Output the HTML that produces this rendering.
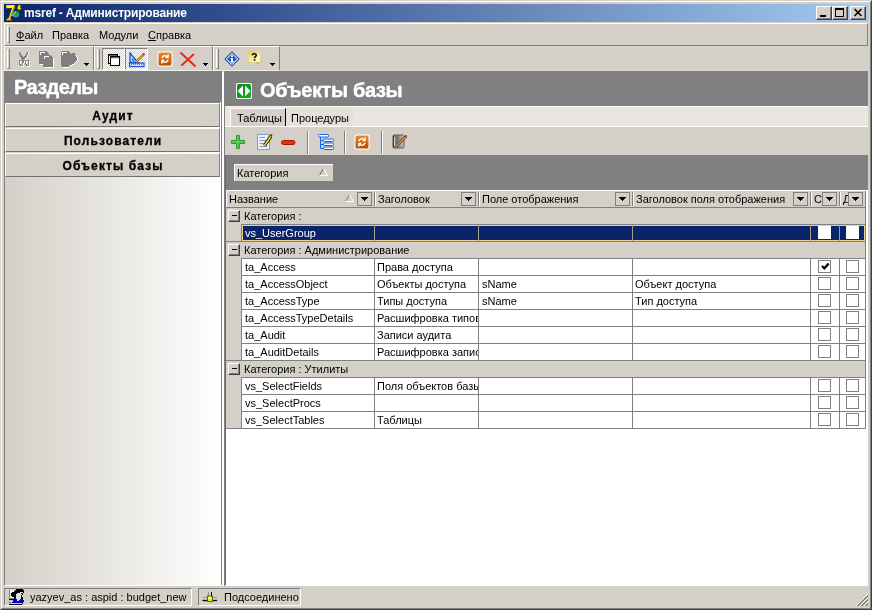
<!DOCTYPE html>
<html><head><meta charset="utf-8">
<style>
*{margin:0;padding:0;box-sizing:border-box}
html,body{width:872px;height:610px;overflow:hidden;background:#D4D0C8;font-family:"Liberation Sans",sans-serif;font-size:11px;color:#000}
.a{position:absolute}
.t{position:absolute;white-space:nowrap;line-height:13px;will-change:transform}
.raised{border-top:1px solid #fff;border-left:1px solid #fff;border-right:1px solid #808080;border-bottom:1px solid #808080}
.sunk{border-top:1px solid #808080;border-left:1px solid #808080;border-right:1px solid #fff;border-bottom:1px solid #fff}
.tri{position:absolute;left:4px;top:4px;width:0;height:0;border-left:3.5px solid transparent;border-right:3.5px solid transparent;border-top:4px solid #000}
.minus{width:12px;height:12px;background:#D4D0C8;border-top:1px solid #fff;border-left:1px solid #fff;border-right:1px solid #404040;border-bottom:1px solid #404040;box-shadow:inset -1px -1px 0 #808080}
.minus:after{content:"";position:absolute;left:3px;top:4px;width:5px;height:1px;background:#000}
.chk{border-top:1px solid #808080;border-left:1px solid #808080;border-right:1px solid #fff;border-bottom:1px solid #fff;background-color:#fff;background-image:conic-gradient(#fff 25%,#D4D0C8 0 50%,#fff 0 75%,#D4D0C8 0);background-size:2px 2px}
</style></head><body>
<!-- window frame -->
<div class="a" style="left:0;top:0;width:872px;height:610px;border-top:1px solid #D4D0C8;border-left:1px solid #D4D0C8;border-right:1px solid #404040;border-bottom:1px solid #404040"></div>
<div class="a" style="left:1px;top:1px;width:870px;height:608px;border-top:1px solid #fff;border-left:1px solid #fff;border-right:1px solid #808080;border-bottom:1px solid #808080"></div>

<!-- title bar -->
<div class="a" style="left:4px;top:4px;width:864px;height:18px;background:linear-gradient(to right,#0A246A,#A6CAF0)"></div>
<div class="t" style="left:24px;top:6px;color:#fff;font-weight:bold;font-size:12px;line-height:14px;letter-spacing:-0.2px">msref - Администрирование</div>

<!-- title buttons -->
<div class="a" style="left:816px;top:6px;width:16px;height:14px;background:#D4D0C8;border-top:1px solid #fff;border-left:1px solid #fff;border-right:1px solid #404040;border-bottom:1px solid #404040;box-shadow:inset -1px -1px 0 #808080"></div>
<div class="a" style="left:832px;top:6px;width:16px;height:14px;background:#D4D0C8;border-top:1px solid #fff;border-left:1px solid #fff;border-right:1px solid #404040;border-bottom:1px solid #404040;box-shadow:inset -1px -1px 0 #808080"></div>
<div class="a" style="left:850px;top:6px;width:16px;height:14px;background:#D4D0C8;border-top:1px solid #fff;border-left:1px solid #fff;border-right:1px solid #404040;border-bottom:1px solid #404040;box-shadow:inset -1px -1px 0 #808080"></div>

<!-- menubar -->
<div class="a" style="left:4px;top:23px;width:864px;height:23px;border-top:1px solid #fff;border-left:1px solid #fff;border-bottom:1px solid #808080;border-right:1px solid #808080"></div>
<div class="a" style="left:7px;top:26px;width:3px;height:17px;border-top:1px solid #fff;border-left:1px solid #fff;border-right:1px solid #808080;border-bottom:1px solid #808080"></div>
<div class="t" style="left:16px;top:29px"><u>Ф</u>айл</div>
<div class="t" style="left:52px;top:29px">Правка</div>
<div class="t" style="left:99px;top:29px">Модули</div>
<div class="t" style="left:148px;top:29px"><u>С</u>правка</div>

<!-- toolbar bands -->
<div class="a" style="left:4px;top:46px;width:90px;height:25px;border-top:1px solid #fff;border-left:1px solid #fff;border-bottom:1px solid #F0EFEA;border-right:1px solid #808080"></div>
<div class="a" style="left:7px;top:49px;width:3px;height:20px;border-left:1px solid #fff;border-right:1px solid #808080;border-bottom:1px solid #808080"></div>
<div class="a" style="left:94px;top:46px;width:119px;height:25px;border-top:1px solid #fff;border-left:1px solid #fff;border-bottom:1px solid #F0EFEA;border-right:1px solid #808080"></div>
<div class="a" style="left:97px;top:49px;width:3px;height:20px;border-left:1px solid #fff;border-right:1px solid #808080;border-bottom:1px solid #808080"></div>
<div class="a" style="left:213px;top:46px;width:67px;height:25px;border-top:1px solid #fff;border-left:1px solid #fff;border-bottom:1px solid #F0EFEA;border-right:1px solid #808080"></div>
<div class="a" style="left:216px;top:49px;width:3px;height:20px;border-left:1px solid #fff;border-right:1px solid #808080;border-bottom:1px solid #808080"></div>

<!-- main -->
<div class="a" style="left:4px;top:71px;width:218px;height:515px;background:linear-gradient(to right,#D4D0C8,#fff);border-left:1px solid #808080;border-top:1px solid #808080;border-bottom:1px solid #fff"></div>
<div class="a" style="left:5px;top:72px;width:216px;height:31px;background:#808080"></div>
<div class="t" style="left:14px;top:76px;color:#fff;font-weight:bold;font-size:20px;line-height:22px;letter-spacing:-0.6px;-webkit-text-stroke:0.4px #fff">Разделы</div>
<div class="a raised" style="left:5px;top:103px;width:215px;height:24px;background:#D4D0C8;border-bottom-color:#707070"></div>
<div class="a raised" style="left:5px;top:128px;width:215px;height:24px;background:#D4D0C8;border-bottom-color:#707070"></div>
<div class="a raised" style="left:5px;top:153px;width:215px;height:24px;background:#D4D0C8;border-bottom-color:#707070"></div>
<div class="t" style="left:5px;top:110px;width:215px;text-align:center;font-weight:bold;font-size:12px;letter-spacing:1.1px;text-indent:1.1px;-webkit-text-stroke:0.3px #000">Аудит</div>
<div class="t" style="left:5px;top:135px;width:215px;text-align:center;font-weight:bold;font-size:12px;letter-spacing:1.1px;text-indent:1.1px;-webkit-text-stroke:0.3px #000">Пользователи</div>
<div class="t" style="left:5px;top:160px;width:215px;text-align:center;font-weight:bold;font-size:12px;letter-spacing:1.1px;text-indent:1.1px;-webkit-text-stroke:0.3px #000">Объекты базы</div>
<div class="a" style="left:222px;top:72px;width:2px;height:514px;background:#fff"></div>
<div class="a" style="left:221px;top:71px;width:1px;height:514px;background:#808080"></div>
<div class="a" style="left:220px;top:102px;width:1px;height:483px;background:#fff"></div>

<!-- right panel -->
<div class="a" style="left:224px;top:71px;width:644px;height:515px;background:#fff;border-left:1px solid #808080;border-top:1px solid #808080"></div>
<div class="a" style="left:225px;top:72px;width:643px;height:34px;background:#808080"></div>
<div class="t" style="left:260px;top:79px;color:#fff;font-weight:bold;font-size:20px;line-height:22px;letter-spacing:-0.35px;-webkit-text-stroke:0.4px #fff">Объекты базы</div>
<!-- tab strip -->
<div class="a" style="left:225px;top:106px;width:643px;height:21px;background:#E9E6E0;border-top:1px solid #F8F8F4;border-bottom:1px solid #fff"></div>
<div class="a" style="left:230px;top:108px;width:56px;height:18px;background:#D4D0C8;border-top:1px solid #fff;border-left:1px solid #fff;border-right:1px solid #000"></div>
<div class="t" style="left:237px;top:112px">Таблицы</div>
<div class="a" style="left:286px;top:108px;width:67px;height:18px;background:#E4E1D8"></div>
<div class="t" style="left:291px;top:112px">Процедуры</div>
<!-- panel toolbar -->
<div class="a" style="left:225px;top:127px;width:643px;height:28px;background:#D4D0C8"></div>
<div class="a" style="left:307px;top:131px;width:2px;height:23px;border-left:1px solid #808080;border-right:1px solid #fff"></div>
<div class="a" style="left:344px;top:131px;width:2px;height:23px;border-left:1px solid #808080;border-right:1px solid #fff"></div>
<div class="a" style="left:381px;top:131px;width:2px;height:23px;border-left:1px solid #808080;border-right:1px solid #fff"></div>
<!-- group panel -->
<div class="a" style="left:225px;top:155px;width:643px;height:35px;background:#808080"></div>
<div class="a" style="left:234px;top:164px;width:99px;height:17px;background:#D4D0C8;border-top:1px solid #fff;border-left:1px solid #fff"></div>
<div class="t" style="left:237px;top:167px">Категория</div>
<svg class="a" style="left:319px;top:168px" width="9" height="8"><path d="M4.5 0.5 L0.5 7.5" stroke="#606060" fill="none"/><path d="M4.5 0.5 L8.5 7.5 L0.5 7.5" stroke="#fff" fill="none"/></svg>

<!-- grid -->
<div class="a" style="left:225px;top:155px;width:1px;height:430px;background:#6C6C6C"></div>
<div class="a" style="left:226px;top:190px;width:639px;height:18px;background:#D4D0C8;border-top:1px solid #fff;border-left:1px solid #fff;border-bottom:1px solid #808080"></div>
<div class="t" style="left:229px;top:193px">Название</div>
<div class="a" style="left:374px;top:192px;width:2px;height:14px;border-left:1px solid #808080;border-right:1px solid #fff"></div>
<div class="a" style="left:357px;top:192px;width:15px;height:14px;background:#D4D0C8;border:1px solid #808080"><svg class="a" style="left:3px;top:4px" width="7" height="4"><path d="M0 0H7V1H6V2H5V3H4V4H3V3H2V2H1V1H0Z" fill="#000"/></svg></div>
<div class="t" style="left:378px;top:193px">Заголовок</div>
<div class="a" style="left:478px;top:192px;width:2px;height:14px;border-left:1px solid #808080;border-right:1px solid #fff"></div>
<div class="a" style="left:461px;top:192px;width:15px;height:14px;background:#D4D0C8;border:1px solid #808080"><svg class="a" style="left:3px;top:4px" width="7" height="4"><path d="M0 0H7V1H6V2H5V3H4V4H3V3H2V2H1V1H0Z" fill="#000"/></svg></div>
<div class="t" style="left:482px;top:193px">Поле отображения</div>
<div class="a" style="left:632px;top:192px;width:2px;height:14px;border-left:1px solid #808080;border-right:1px solid #fff"></div>
<div class="a" style="left:615px;top:192px;width:15px;height:14px;background:#D4D0C8;border:1px solid #808080"><svg class="a" style="left:3px;top:4px" width="7" height="4"><path d="M0 0H7V1H6V2H5V3H4V4H3V3H2V2H1V1H0Z" fill="#000"/></svg></div>
<div class="t" style="left:636px;top:193px">Заголовок поля отображения</div>
<div class="a" style="left:810px;top:192px;width:2px;height:14px;border-left:1px solid #808080;border-right:1px solid #fff"></div>
<div class="a" style="left:793px;top:192px;width:15px;height:14px;background:#D4D0C8;border:1px solid #808080"><svg class="a" style="left:3px;top:4px" width="7" height="4"><path d="M0 0H7V1H6V2H5V3H4V4H3V3H2V2H1V1H0Z" fill="#000"/></svg></div>
<div class="t" style="left:814px;top:193px">С</div>
<div class="a" style="left:839px;top:192px;width:2px;height:14px;border-left:1px solid #808080;border-right:1px solid #fff"></div>
<div class="a" style="left:822px;top:192px;width:15px;height:14px;background:#D4D0C8;border:1px solid #808080"><svg class="a" style="left:3px;top:4px" width="7" height="4"><path d="M0 0H7V1H6V2H5V3H4V4H3V3H2V2H1V1H0Z" fill="#000"/></svg></div>
<div class="t" style="left:843px;top:193px">Д</div>
<div class="a" style="left:848px;top:192px;width:15px;height:14px;background:#D4D0C8;border:1px solid #808080"><svg class="a" style="left:3px;top:4px" width="7" height="4"><path d="M0 0H7V1H6V2H5V3H4V4H3V3H2V2H1V1H0Z" fill="#000"/></svg></div>
<svg class="a" style="left:345px;top:194px" width="9" height="8"><path d="M4.5 0.5 L0.5 7.5" stroke="#808080" fill="none"/><path d="M4.5 0.5 L8.5 7.5 L0.5 7.5" stroke="#fff" fill="none"/></svg>
<div class="a" style="left:226px;top:208px;width:15px;height:220px;background:#D4D0C8"></div>
<div class="a" style="left:226px;top:207px;width:639px;height:17px;background:#D4D0C8;border-top:1px solid #808080"></div>
<div class="a minus" style="left:228px;top:210px"></div>
<div class="t" style="left:244px;top:210px">Категория :</div>
<div class="a" style="left:241px;top:224px;width:624px;height:17px;background:#fff;border-top:1px solid #808080;border-left:1px solid #808080"></div>
<div class="a" style="left:242px;top:225px;width:623px;height:16px;background:#0A246A;border:1px solid #ECD088"></div>
<div class="a" style="left:374px;top:225px;width:1px;height:16px;background:#A8A080"></div>
<div class="a" style="left:478px;top:225px;width:1px;height:16px;background:#A8A080"></div>
<div class="a" style="left:632px;top:225px;width:1px;height:16px;background:#A8A080"></div>
<div class="a" style="left:810px;top:225px;width:1px;height:16px;background:#A8A080"></div>
<div class="a" style="left:839px;top:225px;width:1px;height:16px;background:#A8A080"></div>
<div class="a" style="left:818px;top:226px;width:13px;height:13px;background:#fff"></div>
<div class="a" style="left:846px;top:226px;width:13px;height:13px;background:#fff"></div>
<div class="t" style="left:245px;top:227px;width:129px;overflow:hidden;color:#fff">vs_UserGroup</div>
<div class="a" style="left:226px;top:241px;width:639px;height:17px;background:#D4D0C8;border-top:1px solid #808080"></div>
<div class="a minus" style="left:228px;top:244px"></div>
<div class="t" style="left:244px;top:244px">Категория : Администрирование</div>
<div class="a" style="left:241px;top:258px;width:624px;height:17px;background:#fff;border-top:1px solid #808080;border-left:1px solid #808080"></div>
<div class="a" style="left:374px;top:258px;width:1px;height:17px;background:#808080"></div>
<div class="a" style="left:478px;top:258px;width:1px;height:17px;background:#808080"></div>
<div class="a" style="left:632px;top:258px;width:1px;height:17px;background:#808080"></div>
<div class="a" style="left:810px;top:258px;width:1px;height:17px;background:#808080"></div>
<div class="a" style="left:839px;top:258px;width:1px;height:17px;background:#808080"></div>
<div class="a" style="left:818px;top:260px;width:13px;height:13px;border:1px solid #808080;background:#fff"><svg class="a" style="left:2px;top:1px" width="9" height="9"><path d="M1 4 L3.3 6.3 L7.7 1.5" stroke="#000" stroke-width="2.2" fill="none"/></svg></div>
<div class="a" style="left:846px;top:260px;width:13px;height:13px;border:1px solid #808080;background:#fff"></div>
<div class="t" style="left:245px;top:261px;width:129px;overflow:hidden;color:#000">ta_Access</div>
<div class="t" style="left:377px;top:261px;width:101px;overflow:hidden;color:#000">Права доступа</div>
<div class="a" style="left:241px;top:275px;width:624px;height:17px;background:#fff;border-top:1px solid #808080;border-left:1px solid #808080"></div>
<div class="a" style="left:374px;top:275px;width:1px;height:17px;background:#808080"></div>
<div class="a" style="left:478px;top:275px;width:1px;height:17px;background:#808080"></div>
<div class="a" style="left:632px;top:275px;width:1px;height:17px;background:#808080"></div>
<div class="a" style="left:810px;top:275px;width:1px;height:17px;background:#808080"></div>
<div class="a" style="left:839px;top:275px;width:1px;height:17px;background:#808080"></div>
<div class="a" style="left:818px;top:277px;width:13px;height:13px;border:1px solid #808080;background:#fff"></div>
<div class="a" style="left:846px;top:277px;width:13px;height:13px;border:1px solid #808080;background:#fff"></div>
<div class="t" style="left:245px;top:278px;width:129px;overflow:hidden;color:#000">ta_AccessObject</div>
<div class="t" style="left:377px;top:278px;width:101px;overflow:hidden;color:#000">Объекты доступа</div>
<div class="t" style="left:482px;top:278px;width:150px;overflow:hidden;color:#000">sName</div>
<div class="t" style="left:635px;top:278px;width:175px;overflow:hidden;color:#000">Объект доступа</div>
<div class="a" style="left:241px;top:292px;width:624px;height:17px;background:#fff;border-top:1px solid #808080;border-left:1px solid #808080"></div>
<div class="a" style="left:374px;top:292px;width:1px;height:17px;background:#808080"></div>
<div class="a" style="left:478px;top:292px;width:1px;height:17px;background:#808080"></div>
<div class="a" style="left:632px;top:292px;width:1px;height:17px;background:#808080"></div>
<div class="a" style="left:810px;top:292px;width:1px;height:17px;background:#808080"></div>
<div class="a" style="left:839px;top:292px;width:1px;height:17px;background:#808080"></div>
<div class="a" style="left:818px;top:294px;width:13px;height:13px;border:1px solid #808080;background:#fff"></div>
<div class="a" style="left:846px;top:294px;width:13px;height:13px;border:1px solid #808080;background:#fff"></div>
<div class="t" style="left:245px;top:295px;width:129px;overflow:hidden;color:#000">ta_AccessType</div>
<div class="t" style="left:377px;top:295px;width:101px;overflow:hidden;color:#000">Типы доступа</div>
<div class="t" style="left:482px;top:295px;width:150px;overflow:hidden;color:#000">sName</div>
<div class="t" style="left:635px;top:295px;width:175px;overflow:hidden;color:#000">Тип доступа</div>
<div class="a" style="left:241px;top:309px;width:624px;height:17px;background:#fff;border-top:1px solid #808080;border-left:1px solid #808080"></div>
<div class="a" style="left:374px;top:309px;width:1px;height:17px;background:#808080"></div>
<div class="a" style="left:478px;top:309px;width:1px;height:17px;background:#808080"></div>
<div class="a" style="left:632px;top:309px;width:1px;height:17px;background:#808080"></div>
<div class="a" style="left:810px;top:309px;width:1px;height:17px;background:#808080"></div>
<div class="a" style="left:839px;top:309px;width:1px;height:17px;background:#808080"></div>
<div class="a" style="left:818px;top:311px;width:13px;height:13px;border:1px solid #808080;background:#fff"></div>
<div class="a" style="left:846px;top:311px;width:13px;height:13px;border:1px solid #808080;background:#fff"></div>
<div class="t" style="left:245px;top:312px;width:129px;overflow:hidden;color:#000">ta_AccessTypeDetails</div>
<div class="t" style="left:377px;top:312px;width:101px;overflow:hidden;color:#000">Расшифровка типов доступа</div>
<div class="a" style="left:241px;top:326px;width:624px;height:17px;background:#fff;border-top:1px solid #808080;border-left:1px solid #808080"></div>
<div class="a" style="left:374px;top:326px;width:1px;height:17px;background:#808080"></div>
<div class="a" style="left:478px;top:326px;width:1px;height:17px;background:#808080"></div>
<div class="a" style="left:632px;top:326px;width:1px;height:17px;background:#808080"></div>
<div class="a" style="left:810px;top:326px;width:1px;height:17px;background:#808080"></div>
<div class="a" style="left:839px;top:326px;width:1px;height:17px;background:#808080"></div>
<div class="a" style="left:818px;top:328px;width:13px;height:13px;border:1px solid #808080;background:#fff"></div>
<div class="a" style="left:846px;top:328px;width:13px;height:13px;border:1px solid #808080;background:#fff"></div>
<div class="t" style="left:245px;top:329px;width:129px;overflow:hidden;color:#000">ta_Audit</div>
<div class="t" style="left:377px;top:329px;width:101px;overflow:hidden;color:#000">Записи аудита</div>
<div class="a" style="left:241px;top:343px;width:624px;height:17px;background:#fff;border-top:1px solid #808080;border-left:1px solid #808080"></div>
<div class="a" style="left:374px;top:343px;width:1px;height:17px;background:#808080"></div>
<div class="a" style="left:478px;top:343px;width:1px;height:17px;background:#808080"></div>
<div class="a" style="left:632px;top:343px;width:1px;height:17px;background:#808080"></div>
<div class="a" style="left:810px;top:343px;width:1px;height:17px;background:#808080"></div>
<div class="a" style="left:839px;top:343px;width:1px;height:17px;background:#808080"></div>
<div class="a" style="left:818px;top:345px;width:13px;height:13px;border:1px solid #808080;background:#fff"></div>
<div class="a" style="left:846px;top:345px;width:13px;height:13px;border:1px solid #808080;background:#fff"></div>
<div class="t" style="left:245px;top:346px;width:129px;overflow:hidden;color:#000">ta_AuditDetails</div>
<div class="t" style="left:377px;top:346px;width:101px;overflow:hidden;color:#000">Расшифровка записей аудита</div>
<div class="a" style="left:226px;top:360px;width:639px;height:17px;background:#D4D0C8;border-top:1px solid #808080"></div>
<div class="a minus" style="left:228px;top:363px"></div>
<div class="t" style="left:244px;top:363px">Категория : Утилиты</div>
<div class="a" style="left:241px;top:377px;width:624px;height:17px;background:#fff;border-top:1px solid #808080;border-left:1px solid #808080"></div>
<div class="a" style="left:374px;top:377px;width:1px;height:17px;background:#808080"></div>
<div class="a" style="left:478px;top:377px;width:1px;height:17px;background:#808080"></div>
<div class="a" style="left:632px;top:377px;width:1px;height:17px;background:#808080"></div>
<div class="a" style="left:810px;top:377px;width:1px;height:17px;background:#808080"></div>
<div class="a" style="left:839px;top:377px;width:1px;height:17px;background:#808080"></div>
<div class="a" style="left:818px;top:379px;width:13px;height:13px;border:1px solid #808080;background:#fff"></div>
<div class="a" style="left:846px;top:379px;width:13px;height:13px;border:1px solid #808080;background:#fff"></div>
<div class="t" style="left:245px;top:380px;width:129px;overflow:hidden;color:#000">vs_SelectFields</div>
<div class="t" style="left:377px;top:380px;width:101px;overflow:hidden;color:#000">Поля объектов базы</div>
<div class="a" style="left:241px;top:394px;width:624px;height:17px;background:#fff;border-top:1px solid #808080;border-left:1px solid #808080"></div>
<div class="a" style="left:374px;top:394px;width:1px;height:17px;background:#808080"></div>
<div class="a" style="left:478px;top:394px;width:1px;height:17px;background:#808080"></div>
<div class="a" style="left:632px;top:394px;width:1px;height:17px;background:#808080"></div>
<div class="a" style="left:810px;top:394px;width:1px;height:17px;background:#808080"></div>
<div class="a" style="left:839px;top:394px;width:1px;height:17px;background:#808080"></div>
<div class="a" style="left:818px;top:396px;width:13px;height:13px;border:1px solid #808080;background:#fff"></div>
<div class="a" style="left:846px;top:396px;width:13px;height:13px;border:1px solid #808080;background:#fff"></div>
<div class="t" style="left:245px;top:397px;width:129px;overflow:hidden;color:#000">vs_SelectProcs</div>
<div class="a" style="left:241px;top:411px;width:624px;height:17px;background:#fff;border-top:1px solid #808080;border-left:1px solid #808080"></div>
<div class="a" style="left:374px;top:411px;width:1px;height:17px;background:#808080"></div>
<div class="a" style="left:478px;top:411px;width:1px;height:17px;background:#808080"></div>
<div class="a" style="left:632px;top:411px;width:1px;height:17px;background:#808080"></div>
<div class="a" style="left:810px;top:411px;width:1px;height:17px;background:#808080"></div>
<div class="a" style="left:839px;top:411px;width:1px;height:17px;background:#808080"></div>
<div class="a" style="left:818px;top:413px;width:13px;height:13px;border:1px solid #808080;background:#fff"></div>
<div class="a" style="left:846px;top:413px;width:13px;height:13px;border:1px solid #808080;background:#fff"></div>
<div class="t" style="left:245px;top:414px;width:129px;overflow:hidden;color:#000">vs_SelectTables</div>
<div class="t" style="left:377px;top:414px;width:101px;overflow:hidden;color:#000">Таблицы</div>
<div class="a" style="left:226px;top:428px;width:640px;height:1px;background:#808080"></div>
<div class="a" style="left:865px;top:191px;width:1px;height:238px;background:#808080"></div>


<!-- ICONS -->
<svg class="a" style="left:4px;top:4px" width="20" height="18" viewBox="0 0 20 18">
 <path d="M2 1.3 L10.5 1 L10.8 3 L6 15.5 L4 16 L8 4 L2.5 4.2 Z" fill="#FFFF00"/>
 <path d="M10.5 1 L10.8 3 L6 15.5 L5 15.5 L9.2 3.2 Z" fill="#E09000"/>
 <path d="M4 14 L6.5 14.5 L8 16.3 L2 16.5 Z" fill="#E8D000"/>
 <path d="M6.5 15 L8.5 16.5 L5.5 16.5 Z" fill="#C04000"/>
 <circle cx="11.8" cy="10.2" r="3.3" fill="#3898A0"/>
 <path d="M9.5 8.5 L12.5 7 L14.5 9 L13 11.5 L11 11 Z" fill="#10B020"/>
 <path d="M8 12 L12 8" stroke="#D8C8D8" stroke-width="1"/>
 <path d="M14.5 0.8 L17.3 1.5 L15.8 3.5 L17.8 4 L12.8 8.2 L14.8 5.3 L13 4.8 Z" fill="#FFFF00" stroke="#202000" stroke-width="0.4"/>
</svg>
<!-- title button glyphs -->
<div class="a" style="left:820px;top:15px;width:6px;height:2px;background:#000"></div>
<div class="a" style="left:835px;top:8px;width:9px;height:9px;border:1px solid #000;border-top-width:2px"></div>
<svg class="a" style="left:853px;top:8px" width="10" height="9"><path d="M1.5 1 L8.5 8 M8.5 1 L1.5 8" stroke="#000" stroke-width="1.6"/></svg>

<!-- toolbar 1 disabled icons -->
<svg class="a" style="left:18px;top:51px" width="12" height="16"><rect x="1" y="1" width="1" height="1" fill="#808080"/><rect x="9" y="1" width="1" height="1" fill="#808080"/><rect x="1" y="2" width="2" height="1" fill="#808080"/><rect x="8" y="2" width="2" height="1" fill="#808080"/><rect x="10" y="2" width="1" height="1" fill="#fff"/><rect x="1" y="3" width="2" height="1" fill="#808080"/><rect x="8" y="3" width="2" height="1" fill="#808080"/><rect x="10" y="3" width="1" height="1" fill="#fff"/><rect x="2" y="4" width="2" height="1" fill="#808080"/><rect x="7" y="4" width="2" height="1" fill="#808080"/><rect x="9" y="4" width="1" height="1" fill="#fff"/><rect x="2" y="5" width="3" height="1" fill="#808080"/><rect x="6" y="5" width="3" height="1" fill="#808080"/><rect x="9" y="5" width="1" height="1" fill="#fff"/><rect x="3" y="6" width="5" height="1" fill="#808080"/><rect x="8" y="6" width="1" height="1" fill="#fff"/><rect x="3" y="7" width="4" height="1" fill="#808080"/><rect x="7" y="7" width="1" height="1" fill="#fff"/><rect x="4" y="8" width="3" height="1" fill="#808080"/><rect x="7" y="8" width="1" height="1" fill="#fff"/><rect x="1" y="9" width="5" height="1" fill="#808080"/><rect x="7" y="9" width="4" height="1" fill="#808080"/><rect x="1" y="10" width="1" height="1" fill="#808080"/><rect x="2" y="10" width="2" height="1" fill="#fff"/><rect x="4" y="10" width="2" height="1" fill="#808080"/><rect x="6" y="10" width="1" height="1" fill="#fff"/><rect x="7" y="10" width="1" height="1" fill="#808080"/><rect x="8" y="10" width="2" height="1" fill="#fff"/><rect x="10" y="10" width="1" height="1" fill="#808080"/><rect x="11" y="10" width="1" height="1" fill="#fff"/><rect x="1" y="11" width="1" height="1" fill="#808080"/><rect x="2" y="11" width="1" height="1" fill="#fff"/><rect x="4" y="11" width="2" height="1" fill="#808080"/><rect x="6" y="11" width="1" height="1" fill="#fff"/><rect x="7" y="11" width="1" height="1" fill="#808080"/><rect x="8" y="11" width="1" height="1" fill="#fff"/><rect x="10" y="11" width="1" height="1" fill="#808080"/><rect x="11" y="11" width="1" height="1" fill="#fff"/><rect x="1" y="12" width="1" height="1" fill="#808080"/><rect x="2" y="12" width="1" height="1" fill="#fff"/><rect x="4" y="12" width="1" height="1" fill="#808080"/><rect x="5" y="12" width="1" height="1" fill="#fff"/><rect x="7" y="12" width="1" height="1" fill="#808080"/><rect x="8" y="12" width="1" height="1" fill="#fff"/><rect x="10" y="12" width="1" height="1" fill="#808080"/><rect x="11" y="12" width="1" height="1" fill="#fff"/><rect x="1" y="13" width="2" height="1" fill="#808080"/><rect x="4" y="13" width="1" height="1" fill="#808080"/><rect x="5" y="13" width="1" height="1" fill="#fff"/><rect x="7" y="13" width="2" height="1" fill="#808080"/><rect x="10" y="13" width="1" height="1" fill="#808080"/><rect x="11" y="13" width="1" height="1" fill="#fff"/><rect x="2" y="14" width="3" height="1" fill="#808080"/><rect x="5" y="14" width="1" height="1" fill="#fff"/><rect x="8" y="14" width="3" height="1" fill="#808080"/><rect x="11" y="14" width="1" height="1" fill="#fff"/><rect x="3" y="15" width="3" height="1" fill="#fff"/><rect x="9" y="15" width="3" height="1" fill="#fff"/></svg>
<svg class="a" style="left:39px;top:51px" width="16" height="17"><rect x="0" y="0" width="8" height="1" fill="#808080"/><rect x="0" y="1" width="1" height="1" fill="#808080"/><rect x="1" y="1" width="5" height="1" fill="#fff"/><rect x="6" y="1" width="3" height="1" fill="#808080"/><rect x="0" y="2" width="1" height="1" fill="#808080"/><rect x="1" y="2" width="1" height="1" fill="#fff"/><rect x="2" y="2" width="8" height="1" fill="#808080"/><rect x="0" y="3" width="1" height="1" fill="#808080"/><rect x="1" y="3" width="1" height="1" fill="#fff"/><rect x="2" y="3" width="8" height="1" fill="#808080"/><rect x="10" y="3" width="1" height="1" fill="#fff"/><rect x="0" y="4" width="12" height="1" fill="#808080"/><rect x="0" y="5" width="5" height="1" fill="#808080"/><rect x="5" y="5" width="5" height="1" fill="#fff"/><rect x="10" y="5" width="3" height="1" fill="#808080"/><rect x="0" y="6" width="5" height="1" fill="#808080"/><rect x="5" y="6" width="1" height="1" fill="#fff"/><rect x="6" y="6" width="8" height="1" fill="#808080"/><rect x="0" y="7" width="5" height="1" fill="#808080"/><rect x="5" y="7" width="1" height="1" fill="#fff"/><rect x="6" y="7" width="8" height="1" fill="#808080"/><rect x="14" y="7" width="1" height="1" fill="#fff"/><rect x="0" y="8" width="14" height="1" fill="#808080"/><rect x="14" y="8" width="1" height="1" fill="#fff"/><rect x="0" y="9" width="14" height="1" fill="#808080"/><rect x="14" y="9" width="1" height="1" fill="#fff"/><rect x="0" y="10" width="14" height="1" fill="#808080"/><rect x="14" y="10" width="1" height="1" fill="#fff"/><rect x="0" y="11" width="14" height="1" fill="#808080"/><rect x="14" y="11" width="1" height="1" fill="#fff"/><rect x="0" y="12" width="14" height="1" fill="#808080"/><rect x="14" y="12" width="1" height="1" fill="#fff"/><rect x="1" y="13" width="3" height="1" fill="#fff"/><rect x="4" y="13" width="10" height="1" fill="#808080"/><rect x="14" y="13" width="1" height="1" fill="#fff"/><rect x="4" y="14" width="10" height="1" fill="#808080"/><rect x="14" y="14" width="1" height="1" fill="#fff"/><rect x="4" y="15" width="10" height="1" fill="#808080"/><rect x="14" y="15" width="1" height="1" fill="#fff"/><rect x="5" y="16" width="10" height="1" fill="#fff"/></svg>
<svg class="a" style="left:61px;top:51px" width="17" height="17"><rect x="1" y="0" width="7" height="1" fill="#808080"/><rect x="0" y="1" width="1" height="1" fill="#808080"/><rect x="1" y="1" width="5" height="1" fill="#fff"/><rect x="6" y="1" width="3" height="1" fill="#808080"/><rect x="0" y="2" width="1" height="1" fill="#808080"/><rect x="1" y="2" width="1" height="1" fill="#fff"/><rect x="2" y="2" width="8" height="1" fill="#808080"/><rect x="11" y="2" width="3" height="1" fill="#808080"/><rect x="0" y="3" width="1" height="1" fill="#808080"/><rect x="1" y="3" width="1" height="1" fill="#fff"/><rect x="2" y="3" width="13" height="1" fill="#808080"/><rect x="0" y="4" width="14" height="1" fill="#808080"/><rect x="14" y="4" width="1" height="1" fill="#fff"/><rect x="0" y="5" width="15" height="1" fill="#808080"/><rect x="15" y="5" width="1" height="1" fill="#fff"/><rect x="0" y="6" width="16" height="1" fill="#808080"/><rect x="16" y="6" width="1" height="1" fill="#fff"/><rect x="0" y="7" width="16" height="1" fill="#808080"/><rect x="16" y="7" width="1" height="1" fill="#fff"/><rect x="0" y="8" width="16" height="1" fill="#808080"/><rect x="16" y="8" width="1" height="1" fill="#fff"/><rect x="0" y="9" width="16" height="1" fill="#808080"/><rect x="16" y="9" width="1" height="1" fill="#fff"/><rect x="0" y="10" width="15" height="1" fill="#808080"/><rect x="15" y="10" width="1" height="1" fill="#fff"/><rect x="0" y="11" width="14" height="1" fill="#808080"/><rect x="14" y="11" width="1" height="1" fill="#fff"/><rect x="0" y="12" width="13" height="1" fill="#808080"/><rect x="13" y="12" width="1" height="1" fill="#fff"/><rect x="0" y="13" width="11" height="1" fill="#808080"/><rect x="11" y="13" width="2" height="1" fill="#fff"/><rect x="0" y="14" width="9" height="1" fill="#808080"/><rect x="9" y="14" width="2" height="1" fill="#fff"/><rect x="1" y="15" width="7" height="1" fill="#808080"/><rect x="8" y="15" width="1" height="1" fill="#fff"/><rect x="2" y="16" width="6" height="1" fill="#fff"/></svg>
<svg class="a" style="left:84px;top:63px" width="5" height="3"><path d="M0 0H5V1H4V2H3V3H2V2H1V1H0Z" fill="#000"/></svg>

<!-- checked buttons -->
<div class="a chk" style="left:102px;top:48px;width:23px;height:22px"></div>
<div class="a chk" style="left:125px;top:48px;width:23px;height:22px"></div>
<svg class="a" style="left:107px;top:53px" width="15" height="14" viewBox="0 0 15 14">
 <rect x="1.5" y="1.5" width="9" height="9" fill="#fff" stroke="#000"/>
 <rect x="2" y="2" width="8" height="1" fill="#3060E0"/>
 <rect x="3.5" y="3.5" width="9" height="9" fill="#fff" stroke="#000"/>
 <rect x="4" y="4" width="8" height="1.2" fill="#3060E0"/>
</svg>
<svg class="a" style="left:128px;top:52px" width="18" height="16" viewBox="0 0 18 16">
 <path d="M2 1 L2 10.5 L10 10.5 Z" fill="#D8D0F8" stroke="#1050D0" stroke-width="1.3"/>
 <path d="M4 6 L4 8.8 L6.8 8.8 Z" fill="#1050D0"/>
 <rect x="1.5" y="11" width="14.5" height="3.6" fill="#D8D0F8" stroke="#1050D0" stroke-width="1.1"/>
 <path d="M3.5 11.5 V12.5 M5.5 11.5 V12.5 M7.5 11.5 V12.5 M9.5 11.5 V12.5 M11.5 11.5 V12.5 M13.5 11.5 V12.5" stroke="#1050D0" stroke-width="1"/>
 <path d="M8 10 L15.5 2.5" stroke="#604000" stroke-width="2.2"/>
 <path d="M8 10 L15.5 2.5" stroke="#F8C020" stroke-width="1.1"/>
 <circle cx="15.8" cy="2.2" r="1.1" fill="#E02040"/>
</svg>

<!-- orange refresh -->
<svg class="a" style="left:157px;top:51px" width="16" height="16" viewBox="0 0 16 16">
 <defs><linearGradient id="og" x1="0" y1="0" x2="0" y2="1"><stop offset="0" stop-color="#F08828"/><stop offset="1" stop-color="#B84A00"/></linearGradient></defs>
 <rect x="0.5" y="0.5" width="15" height="15" rx="2" fill="#fff"/>
 <rect x="1.5" y="1.5" width="13" height="13" rx="1.5" fill="url(#og)"/>
 <path d="M4.3 7.2 C4.5 4 8.8 3.3 10.3 5 L10.5 3.2 L11.8 3.2 L11.8 7.2 L8 7.2 L9.3 6 C8.3 5 6 5.3 5.9 7.2 Z" fill="#fff"/>
 <path d="M11.7 8.8 C11.5 12 7.2 12.7 5.7 11 L5.5 12.8 L4.2 12.8 L4.2 8.8 L8 8.8 L6.7 10 C7.7 11 10 10.7 10.1 8.8 Z" fill="#fff"/>
</svg>
<!-- red X -->
<svg class="a" style="left:179px;top:51px" width="18" height="17" viewBox="0 0 18 17">
 <path d="M1.5 1.5 L16.5 15.5" stroke="#E82818" stroke-width="2"/>
 <path d="M15 3 L2.5 14.5" stroke="#E82818" stroke-width="1.8"/>
 <path d="M1.5 15 L3.5 12.5 L4.5 13.5 Z" fill="#E82818"/>
</svg>
<svg class="a" style="left:203px;top:63px" width="5" height="3"><path d="M0 0H5V1H4V2H3V3H2V2H1V1H0Z" fill="#000"/></svg>

<!-- info -->
<svg class="a" style="left:224px;top:51px" width="16" height="16" viewBox="0 0 16 16">
 <path d="M8 0.3 L15.7 8 L8 15.7 L0.3 8 Z" fill="#1848B0"/>
 <path d="M8 1.8 L14.2 8 L8 14.2 L1.8 8 Z" fill="#fff"/>
 <path d="M8 3 L13 8 L8 13 L3 8 Z" fill="#1858C8"/>
 <rect x="7" y="4.5" width="2" height="1.5" fill="#fff"/>
 <path d="M6.5 7 H9 V10.5 H9.8 V11.5 H6.3 V10.5 H7 V8 H6.5 Z" fill="#fff"/>
</svg>
<!-- help -->
<svg class="a" style="left:247px;top:51px" width="15" height="15" viewBox="0 0 15 15">
 <defs><linearGradient id="hg" x1="0" y1="0" x2="1" y2="1"><stop offset="0" stop-color="#F0D040"/><stop offset="0.6" stop-color="#F8F0C8"/><stop offset="1" stop-color="#FFFFF0"/></linearGradient></defs>
 <rect x="1" y="1" width="12.5" height="10.5" rx="2" fill="url(#hg)" stroke="#E8C850" stroke-width="0.7"/>
 <path d="M9 11.3 L11.5 13.5 L11.5 11.3 Z" fill="#D89828"/>
 <path d="M5.3 4.3 C5.3 2.2 9.3 2.2 9.3 4.2 C9.3 5.6 7.5 5.6 7.5 7.2" stroke="#101010" stroke-width="1.6" fill="none"/>
 <rect x="6.7" y="8.2" width="1.7" height="1.6" fill="#101010"/>
</svg>
<svg class="a" style="left:270px;top:63px" width="5" height="3"><path d="M0 0H5V1H4V2H3V3H2V2H1V1H0Z" fill="#000"/></svg>

<!-- green header icon -->
<svg class="a" style="left:236px;top:83px" width="16" height="16" viewBox="0 0 16 16">
 <defs><linearGradient id="gg" x1="0" y1="0" x2="1" y2="1"><stop offset="0" stop-color="#108818"/><stop offset="1" stop-color="#00B818"/></linearGradient></defs>
 <rect x="0" y="0" width="16" height="16" rx="2" fill="#fff"/>
 <rect x="1" y="1" width="14" height="14" rx="1.5" fill="url(#gg)"/>
 <path d="M7 2.5 L7 13.5 L1.6 8 Z" fill="#fff"/>
 <path d="M9 2.5 L9 13.5 L14.4 8 Z" fill="#fff"/>
</svg>

<!-- panel toolbar icons -->
<svg class="a" style="left:231px;top:135px" width="15" height="15" viewBox="0 0 15 15">
 <path d="M5.5 0.5 H8.5 V5.5 H13.5 V8.5 H8.5 V13.5 H5.5 V8.5 H0.5 V5.5 H5.5 Z" fill="#58C858" stroke="#2E9A2E" stroke-width="1"/>
</svg>
<svg class="a" style="left:257px;top:133px" width="16" height="17" viewBox="0 0 16 17">
 <rect x="0.5" y="1.5" width="12" height="15" fill="#E8F0FF" stroke="#8898D0"/>
 <path d="M2.5 4.5 H8 M2.5 7.5 H9 M2.5 10.5 H8 M2.5 13.5 H10" stroke="#8898B8" stroke-width="1"/>
 <path d="M7.5 12.5 L14 3" stroke="#000" stroke-width="3.2"/>
 <path d="M7.5 12.5 L14 3" stroke="#F0F000" stroke-width="1.6"/>
 <path d="M13 2.5 L14.5 0.8 L15.5 2 L14.5 4 Z" fill="#802080"/>
</svg>
<svg class="a" style="left:281px;top:140px" width="15" height="5" viewBox="0 0 15 5">
 <rect x="0.5" y="0.5" width="13.5" height="4" rx="2" fill="#E83010" stroke="#A81800" stroke-width="1"/>
</svg>
<svg class="a" style="left:317px;top:134px" width="17" height="17" viewBox="0 0 17 17">
 <g fill="#fff" stroke="#1068E8" stroke-width="1">
 <rect x="1.5" y="0.5" width="10" height="2.5" rx="0.8"/>
 <rect x="6.5" y="5" width="10" height="2.5" rx="0.8"/>
 <rect x="6.5" y="9" width="10" height="2.5" rx="0.8"/>
 <rect x="6.5" y="13" width="10" height="2.5" rx="0.8"/>
 </g>
 <path d="M3.5 3 V14.5 H6.5 M3.5 6.5 H6.5 M3.5 10.5 H6.5" stroke="#1068E8" stroke-width="1" fill="none"/>
</svg>
<svg class="a" style="left:354px;top:134px" width="16" height="16" viewBox="0 0 16 16">
 <rect x="0.5" y="0.5" width="15" height="15" rx="2" fill="#fff"/>
 <rect x="1.5" y="1.5" width="13" height="13" rx="1.5" fill="url(#og)"/>
 <path d="M4.3 7.2 C4.5 4 8.8 3.3 10.3 5 L10.5 3.2 L11.8 3.2 L11.8 7.2 L8 7.2 L9.3 6 C8.3 5 6 5.3 5.9 7.2 Z" fill="#fff"/>
 <path d="M11.7 8.8 C11.5 12 7.2 12.7 5.7 11 L5.5 12.8 L4.2 12.8 L4.2 8.8 L8 8.8 L6.7 10 C7.7 11 10 10.7 10.1 8.8 Z" fill="#fff"/>
</svg>
<svg class="a" style="left:392px;top:134px" width="16" height="15" viewBox="0 0 16 15">
 <defs><linearGradient id="mg" x1="0" y1="0" x2="1" y2="0"><stop offset="0" stop-color="#A0A0A8"/><stop offset="0.35" stop-color="#707070"/><stop offset="1" stop-color="#C8C8C8"/></linearGradient></defs>
 <rect x="1" y="1" width="11" height="13" rx="1" fill="url(#mg)" stroke="#606060" stroke-width="1"/>
 <rect x="1" y="1.5" width="1.2" height="12" fill="#303030"/>
 <path d="M2.5 3 V12" stroke="#E8E8F0" stroke-width="0.8"/>
 <path d="M5 11 L14 2.5" stroke="#503010" stroke-width="2.6"/>
 <path d="M5 11 L14 2.5" stroke="#F0A020" stroke-width="1.4"/>
 <circle cx="14" cy="2" r="1" fill="#E01010"/>
</svg>

<!-- status bar icons -->
<svg class="a" style="left:7px;top:588px" width="18" height="17"><rect x="2" y="1" width="5" height="1" fill="#C8C8C8"/><rect x="9" y="1" width="7" height="1" fill="#000"/><rect x="2" y="2" width="1" height="1" fill="#808080"/><rect x="3" y="2" width="5" height="1" fill="#F0F0F0"/><rect x="8" y="2" width="9" height="1" fill="#000"/><rect x="2" y="3" width="1" height="1" fill="#808080"/><rect x="3" y="3" width="4" height="1" fill="#F0F0F0"/><rect x="7" y="3" width="10" height="1" fill="#000"/><rect x="2" y="4" width="1" height="1" fill="#808080"/><rect x="3" y="4" width="2" height="1" fill="#F0F0F0"/><rect x="5" y="4" width="8" height="1" fill="#000"/><rect x="13" y="4" width="3" height="1" fill="#E0E0E8"/><rect x="16" y="4" width="1" height="1" fill="#000"/><rect x="2" y="5" width="1" height="1" fill="#808080"/><rect x="3" y="5" width="1" height="1" fill="#F0F0F0"/><rect x="4" y="5" width="6" height="1" fill="#000"/><rect x="10" y="5" width="4" height="1" fill="#E0E0E8"/><rect x="14" y="5" width="1" height="1" fill="#0000E0"/><rect x="15" y="5" width="1" height="1" fill="#000"/><rect x="2" y="6" width="1" height="1" fill="#808080"/><rect x="3" y="6" width="1" height="1" fill="#F0F0F0"/><rect x="4" y="6" width="5" height="1" fill="#000"/><rect x="9" y="6" width="6" height="1" fill="#E0E0E8"/><rect x="15" y="6" width="1" height="1" fill="#000"/><rect x="2" y="7" width="1" height="1" fill="#808080"/><rect x="3" y="7" width="1" height="1" fill="#F0F0F0"/><rect x="4" y="7" width="5" height="1" fill="#000"/><rect x="9" y="7" width="5" height="1" fill="#E0E0E8"/><rect x="14" y="7" width="1" height="1" fill="#000"/><rect x="2" y="8" width="1" height="1" fill="#808080"/><rect x="3" y="8" width="2" height="1" fill="#F0F0F0"/><rect x="5" y="8" width="4" height="1" fill="#000"/><rect x="9" y="8" width="5" height="1" fill="#E0E0E8"/><rect x="14" y="8" width="1" height="1" fill="#000"/><rect x="2" y="9" width="1" height="1" fill="#808080"/><rect x="3" y="9" width="4" height="1" fill="#F0F0F0"/><rect x="7" y="9" width="2" height="1" fill="#000"/><rect x="9" y="9" width="5" height="1" fill="#E0E0E8"/><rect x="14" y="9" width="2" height="1" fill="#000"/><rect x="2" y="10" width="5" height="1" fill="#808080"/><rect x="7" y="10" width="1" height="1" fill="#000"/><rect x="8" y="10" width="1" height="1" fill="#000"/><rect x="9" y="10" width="5" height="1" fill="#E0E0E8"/><rect x="14" y="10" width="2" height="1" fill="#000"/><rect x="2" y="11" width="6" height="1" fill="#000"/><rect x="8" y="11" width="2" height="1" fill="#0000E0"/><rect x="10" y="11" width="3" height="1" fill="#E0E0E8"/><rect x="13" y="11" width="3" height="1" fill="#0000E0"/><rect x="1" y="12" width="5" height="1" fill="#C8C8C8"/><rect x="6" y="12" width="4" height="1" fill="#0000E0"/><rect x="10" y="12" width="2" height="1" fill="#E0E0E8"/><rect x="12" y="12" width="5" height="1" fill="#0000E0"/><rect x="1" y="13" width="5" height="1" fill="#C8C8C8"/><rect x="6" y="13" width="11" height="1" fill="#0000E0"/><rect x="1" y="14" width="1" height="1" fill="#C8C8C8"/><rect x="2" y="14" width="2" height="1" fill="#00C000"/><rect x="4" y="14" width="1" height="1" fill="#C8C8C8"/><rect x="5" y="14" width="10" height="1" fill="#0000E0"/><rect x="15" y="14" width="1" height="1" fill="#000"/><rect x="2" y="15" width="13" height="1" fill="#C8C8C8"/><rect x="15" y="15" width="1" height="1" fill="#000"/><rect x="2" y="16" width="13" height="1" fill="#000"/></svg>
<svg class="a" style="left:202px;top:591px" width="16" height="12" viewBox="0 0 16 12">
 <path d="M1 6.5 H15" stroke="#A0A0A0" stroke-width="1"/>
 <path d="M0.5 9.5 H15" stroke="#000" stroke-width="1.3"/>
 <path d="M6.5 1 V5 M9.5 1 V5" stroke="#000" stroke-width="1"/>
 <path d="M6.5 1 V5" stroke="#9090A0" stroke-width="1"/>
 <rect x="5.5" y="5" width="5" height="5.5" fill="#E0F000" stroke="#606000" stroke-width="1"/>
 <rect x="6.5" y="6" width="2" height="2" fill="#fff"/>
</svg>
<!-- size grip -->
<svg class="a" style="left:856px;top:594px" width="12" height="12"><rect x="11" y="0" width="1" height="1" fill="#fff"/><rect x="10" y="1" width="1" height="1" fill="#fff"/><rect x="11" y="1" width="1" height="1" fill="#808080"/><rect x="9" y="2" width="1" height="1" fill="#fff"/><rect x="10" y="2" width="2" height="1" fill="#808080"/><rect x="8" y="3" width="1" height="1" fill="#fff"/><rect x="9" y="3" width="2" height="1" fill="#808080"/><rect x="7" y="4" width="1" height="1" fill="#fff"/><rect x="8" y="4" width="2" height="1" fill="#808080"/><rect x="11" y="4" width="1" height="1" fill="#fff"/><rect x="6" y="5" width="1" height="1" fill="#fff"/><rect x="7" y="5" width="2" height="1" fill="#808080"/><rect x="10" y="5" width="1" height="1" fill="#fff"/><rect x="11" y="5" width="1" height="1" fill="#808080"/><rect x="5" y="6" width="1" height="1" fill="#fff"/><rect x="6" y="6" width="2" height="1" fill="#808080"/><rect x="9" y="6" width="1" height="1" fill="#fff"/><rect x="10" y="6" width="2" height="1" fill="#808080"/><rect x="4" y="7" width="1" height="1" fill="#fff"/><rect x="5" y="7" width="2" height="1" fill="#808080"/><rect x="8" y="7" width="1" height="1" fill="#fff"/><rect x="9" y="7" width="2" height="1" fill="#808080"/><rect x="3" y="8" width="1" height="1" fill="#fff"/><rect x="4" y="8" width="2" height="1" fill="#808080"/><rect x="7" y="8" width="1" height="1" fill="#fff"/><rect x="8" y="8" width="2" height="1" fill="#808080"/><rect x="11" y="8" width="1" height="1" fill="#fff"/><rect x="2" y="9" width="1" height="1" fill="#fff"/><rect x="3" y="9" width="2" height="1" fill="#808080"/><rect x="6" y="9" width="1" height="1" fill="#fff"/><rect x="7" y="9" width="2" height="1" fill="#808080"/><rect x="10" y="9" width="1" height="1" fill="#fff"/><rect x="11" y="9" width="1" height="1" fill="#808080"/><rect x="1" y="10" width="1" height="1" fill="#fff"/><rect x="2" y="10" width="2" height="1" fill="#808080"/><rect x="5" y="10" width="1" height="1" fill="#fff"/><rect x="6" y="10" width="2" height="1" fill="#808080"/><rect x="9" y="10" width="1" height="1" fill="#fff"/><rect x="10" y="10" width="2" height="1" fill="#808080"/><rect x="0" y="11" width="1" height="1" fill="#fff"/><rect x="1" y="11" width="2" height="1" fill="#808080"/><rect x="4" y="11" width="1" height="1" fill="#fff"/><rect x="5" y="11" width="2" height="1" fill="#808080"/><rect x="8" y="11" width="1" height="1" fill="#fff"/><rect x="9" y="11" width="2" height="1" fill="#808080"/></svg>

<!-- statusbar -->
<div class="a sunk" style="left:4px;top:588px;width:188px;height:18px"></div>
<div class="t" style="left:30px;top:591px">yazyev_as : aspid : budget_new</div>
<div class="a sunk" style="left:198px;top:588px;width:103px;height:18px"></div>
<div class="t" style="left:224px;top:591px">Подсоединено</div>
</body></html>
